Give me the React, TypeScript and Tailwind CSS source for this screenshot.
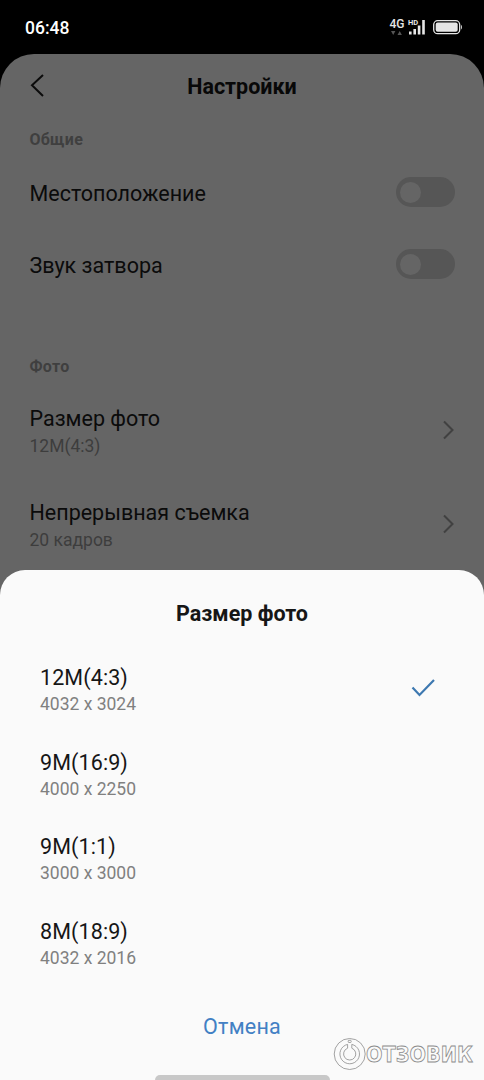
import React from "react";

interface SwitchRowProps {
  label: string;
}

const SwitchRow: React.FC<SwitchRowProps> = ({ label }) => {
  return (
    <div className="flex h-18 items-center justify-between">
      <div className="pt-0.5 text-[21.5px] text-[#0b0b0b]">{label}</div>
      <div className="mb-[2px] flex h-[30px] w-[59px] items-center rounded-full bg-[#565656] pl-1">
        <div className="size-[21px] rounded-full bg-[#656565]"></div>
      </div>
    </div>
  );
};

interface LinkRowProps {
  label: string;
  value: string;
}

const LinkRow: React.FC<LinkRowProps> = ({ label, value }) => {
  return (
    <div className="flex h-[94px] items-center justify-between">
      <div className="pt-1">
        <div className="text-[21.5px] leading-7 text-[#0b0b0b]">{label}</div>
        <div className="text-[17.5px] leading-[26px] text-[#3d3d3d]">{value}</div>
      </div>
      <svg className="h-5 w-3" viewBox="0 0 12 20" fill="none" stroke="#414141" strokeWidth="2">
        <path d="M1 1.5L9.5 10L1 18.5" />
      </svg>
    </div>
  );
};

const sizes = [
  { name: "12M(4:3)", pixels: "4032 x 3024", selected: true },
  { name: "9M(16:9)", pixels: "4000 x 2250" },
  { name: "9M(1:1)", pixels: "3000 x 3000" },
  { name: "8M(18:9)", pixels: "4032 x 2016" },
];

const StatusBar: React.FC = () => {
  return (
    <div className="flex h-[54px] items-center justify-between pl-[25px] pr-[21px] text-white">
      <div className="pt-[3px] text-[17.5px] font-medium">06:48</div>
      <svg className="h-5 w-[74px]" viewBox="0 0 74 20" fontFamily="Roboto, sans-serif">
        <text x="0.5" y="11" fontSize="12" fontWeight="500" fill="#e6e6e6">4G</text>
        <path d="M2 14h4.4l-2.2 4zM8.5 18h4.4l-2.2-4z" fill="#555" />
        <text x="19" y="8" fontSize="7.5" fontWeight="700" fill="#e6e6e6">HD</text>
        <path d="M20 14.5h2.6v3H20zM24.4 12h2.6v5.5h-2.6zM28.8 8.5h2.6v9h-2.6zM33.2 3h2.6v14.5h-2.6z" fill="#e6e6e6" />
        <rect x="44.7" y="3.7" width="26" height="13" rx="4" fill="none" stroke="#e6e6e6" strokeWidth="1.3" />
        <rect x="46.7" y="5.6" width="22" height="9.2" rx="2" fill="#e6e6e6" />
        <path d="M72 8c1.2.4 1.2 4 0 4.4z" fill="#e6e6e6" />
      </svg>
    </div>
  );
};

const Watermark: React.FC = () => {
  return (
    <svg className="absolute bottom-[9px] right-1.5 h-[34px] w-[145px]" viewBox="0 0 145 34" fill="#fafafa" stroke="#8b8b8b" strokeWidth="0.8">
      <circle cx="16.7" cy="17" r="15.5" />
      <path d="M14.6 7.4A9.8 9.8 0 1 0 18.8 7.4V11.2A6.1 6.1 0 1 1 14.6 11.2Z" />
      <rect x="15.2" y="3.3" width="3" height="2.2" rx="0.8" />
      <text
        className="font-['DejaVu_Sans',sans-serif] text-[20.5px] font-bold"
        x="33"
        y="24.5"
        textLength="107"
        lengthAdjust="spacingAndGlyphs"
      >
        ОТЗОВИК
      </text>
    </svg>
  );
};

const App: React.FC = () => {
  return (
    <div className="relative h-[1080px] w-[484px] overflow-hidden bg-black font-[Roboto,sans-serif]">
      <StatusBar />
      <div className="h-[1026px] rounded-t-[34px] bg-[#656565] px-[29.5px]">
        <div className="grid h-16 grid-cols-[16px_1fr_16px] items-center">
          <svg className="h-6 w-4" viewBox="0 0 16 24" fill="none" stroke="#0b0b0b" strokeWidth="2">
            <path d="M13 1L2 11.3L13 22" />
          </svg>
          <div className="pt-0.5 text-center text-[21.5px] font-bold text-[#080808]">Настройки</div>
        </div>
        <div className="flex h-[39px] items-center pt-[5px] text-[16px] font-bold tracking-[0.3px] text-[#3f3f3f]">Общие</div>
        <SwitchRow label="Местоположение" />
        <SwitchRow label="Звук затвора" />
        <div className="flex h-[82px] items-end pb-1 text-[16px] font-bold tracking-[0.3px] text-[#3f3f3f]">Фото</div>
        <LinkRow label="Размер фото" value="12M(4:3)" />
        <LinkRow label="Непрерывная съемка" value="20 кадров" />
      </div>

      <div className="absolute inset-x-0 bottom-0 flex h-[510px] flex-col rounded-t-[25px] bg-[#fafafa]">
        <div className="flex h-[78px] items-center justify-center pt-[11px] text-[21.5px] font-bold text-[#161616]">Размер фото</div>
        {sizes.map((size) => (
          <div key={size.name} className="flex h-[84.7px] items-center justify-between pl-10 pr-[49px]">
            <div className="pb-px">
              <div className="text-[21.5px] leading-7 tracking-[0.1px] text-[#161616]">{size.name}</div>
              <div className="text-[17.5px] leading-6 text-[#808080]">{size.pixels}</div>
            </div>
            {size.selected && (
              <svg className="mb-1 h-5 w-6" viewBox="0 0 24 20" fill="none" stroke="#3d78b0" strokeWidth="2.2">
                <path d="M1.5 9.5L8.5 17L23 2" />
              </svg>
            )}
          </div>
        ))}
        <div className="flex h-[78px] items-center justify-center pt-0.5 text-[21.5px] tracking-[0.2px] text-[#4280c4]">Отмена</div>
        <div className="mx-auto mt-auto h-[5px] w-[175px] rounded-t-full bg-[#c8c8c8]"></div>
      </div>
      <Watermark />
    </div>
  );
};

export default App;
